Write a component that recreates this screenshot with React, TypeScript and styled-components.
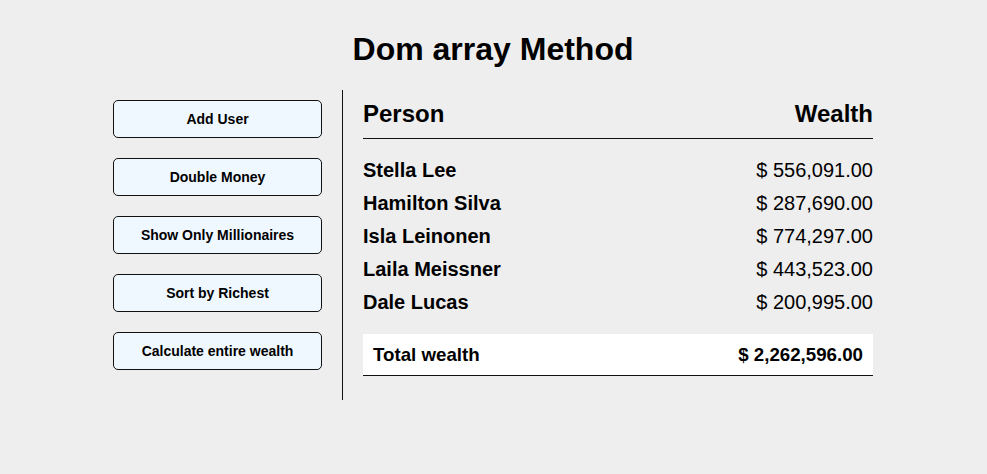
import React from "react";
import styled, { createGlobalStyle } from "styled-components";

const GlobalStyle = createGlobalStyle`
  html, body {
    margin: 0;
    padding: 0;
    background: #eeeeee;
    font-family: "Liberation Sans", Arial, sans-serif;
    color: #000;
  }
`;

const Page = styled.div`
  display: flex;
  flex-direction: column;
  align-items: center;
  padding: 31px 1px 0 0;
`;

const Title = styled.h1`
  margin: 0 0 2px;
  font-size: 32px;
  line-height: 37px;
  font-weight: bold;
`;

const Container = styled.div`
  display: flex;
  box-sizing: content-box;
  width: 800px;
  padding: 20px;
`;

const Aside = styled.aside`
  box-sizing: content-box;
  width: 209px;
  padding: 10px 20px;
  border-right: 1px solid #111;
`;

const Button = styled.button`
  display: block;
  box-sizing: border-box;
  width: 100%;
  padding: 10px;
  margin: 0 0 20px;
  background: #f0f8ff;
  border: 1px solid #111;
  border-radius: 5px;
  font-family: "Liberation Sans", Arial, sans-serif;
  font-size: 14px;
  line-height: 16px;
  font-weight: bold;
  color: #000;
  cursor: pointer;
`;

const Main = styled.main`
  flex: 1;
  padding: 10px 20px;
`;

const Header = styled.h2`
  display: flex;
  justify-content: space-between;
  margin: 0 0 20px;
  padding-bottom: 10px;
  border-bottom: 1px solid #111;
  font-size: 24px;
  line-height: 27.6px;
  font-weight: bold;
`;

const PersonRow = styled.div`
  display: flex;
  justify-content: space-between;
  font-size: 20px;
  line-height: 23px;
  margin-bottom: 10px;
`;

const Name = styled.strong`
  font-weight: bold;
`;

const Money = styled.span`
  font-weight: normal;
`;

const Total = styled.h3`
  display: flex;
  justify-content: space-between;
  margin: 20px 0 0;
  padding: 10px;
  background: #fff;
  border-bottom: 1px solid #111;
  font-size: 18.72px;
  line-height: 21.5px;
  font-weight: bold;
`;

const people = [
  { name: "Stella Lee", money: "$ 556,091.00" },
  { name: "Hamilton Silva", money: "$ 287,690.00" },
  { name: "Isla Leinonen", money: "$ 774,297.00" },
  { name: "Laila Meissner", money: "$ 443,523.00" },
  { name: "Dale Lucas", money: "$ 200,995.00" },
];

const buttons = [
  "Add User",
  "Double Money",
  "Show Only Millionaires",
  "Sort by Richest",
  "Calculate entire wealth",
];

export default function App() {
  return (
    <>
      <GlobalStyle />
      <Page>
        <Title>Dom array Method</Title>
        <Container>
          <Aside>
            {buttons.map((b) => (
              <Button key={b}>{b}</Button>
            ))}
          </Aside>
          <Main>
            <Header>
              <span>Person</span>
              <span>Wealth</span>
            </Header>
            {people.map((p) => (
              <PersonRow key={p.name}>
                <Name>{p.name}</Name>
                <Money>{p.money}</Money>
              </PersonRow>
            ))}
            <Total>
              <span>Total wealth</span>
              <span>$ 2,262,596.00</span>
            </Total>
          </Main>
        </Container>
      </Page>
    </>
  );
}
